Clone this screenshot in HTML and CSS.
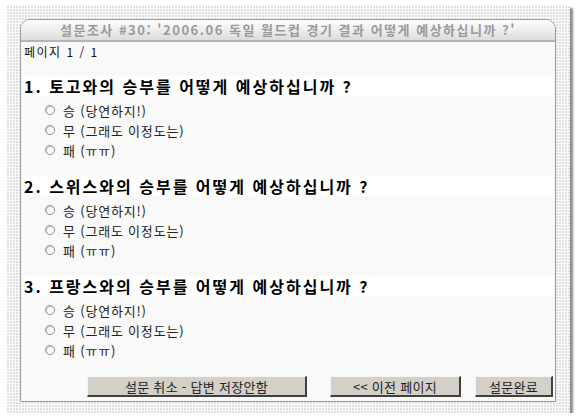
FILE: index.html
```html
<!DOCTYPE html>
<html lang="ko">
<head>
    <meta charset="UTF-8">
    <title>설문조사</title>
    <link rel="stylesheet" href="styles.css">
</head>
<body>
    <div class="frame">
        <div class="panel">
            <div class="title">설문조사 #30: '2006.06 독일 월드컵 경기 결과 어떻게 예상하십니까 ?'</div>
            <div class="content">
                <div class="page-info">페이지 1 / 1</div>

                <div class="question">
                    <h2>1. 토고와의 승부를 어떻게 예상하십니까 ?</h2>
                    <label class="option"><span class="radio"></span>승 (당연하지!)</label>
                    <label class="option"><span class="radio"></span>무 (그래도 이정도는)</label>
                    <label class="option"><span class="radio"></span>패 (ㅠㅠ)</label>
                </div>

                <div class="question">
                    <h2>2. 스위스와의 승부를 어떻게 예상하십니까 ?</h2>
                    <label class="option"><span class="radio"></span>승 (당연하지!)</label>
                    <label class="option"><span class="radio"></span>무 (그래도 이정도는)</label>
                    <label class="option"><span class="radio"></span>패 (ㅠㅠ)</label>
                </div>

                <div class="question">
                    <h2>3. 프랑스와의 승부를 어떻게 예상하십니까 ?</h2>
                    <label class="option"><span class="radio"></span>승 (당연하지!)</label>
                    <label class="option"><span class="radio"></span>무 (그래도 이정도는)</label>
                    <label class="option"><span class="radio"></span>패 (ㅠㅠ)</label>
                </div>

                <div class="buttons">
                    <button class="btn btn-cancel">설문 취소 - 답변 저장안함</button>
                    <button class="btn btn-prev">&lt;&lt; 이전 페이지</button>
                    <button class="btn btn-done">설문완료</button>
                </div>
            </div>
        </div>
    </div>
</body>
</html>
```

FILE: styles.css
```css
body {
    margin: 0;
    padding: 5px 0 0 6px;
    background: #fff;
    font-family: "Noto Sans CJK KR", "Liberation Sans", sans-serif;
    color: #111;
}
.frame {
    width: 564px;
    height: 408px;
    box-sizing: border-box;
    padding: 14px 14px 11px 14px;
    background-color: #dedede;
    background-image: linear-gradient(90deg, #fff 1px, transparent 1px), linear-gradient(#fff 1px, transparent 1px);
    background-size: 3px 3px;
    box-shadow: 3px 3px 2px #8a8a8a;
}
.panel {
    height: 100%;
    box-sizing: border-box;
    border: 1px solid #9a9a9a;
    border-radius: 10px 10px 0 0;
    background: #f9f9f9;
    display: flex;
    flex-direction: column;
}
.title {
    height: 20px;
    line-height: 20px;
    border-bottom: 2px solid #b4b4b4;
    border-radius: 9px 9px 0 0;
    background: linear-gradient(#ffffff, #dcdcdc);
    text-align: center;
    color: #9a9a9a;
    font-size: 13px;
    font-weight: bold;
    letter-spacing: 1.5px;
}
.content {
    flex: 1;
    padding: 2px 2px 0 3px;
    display: flex;
    flex-direction: column;
}
.page-info {
    height: 16px;
    line-height: 16px;
    font-size: 12px;
    letter-spacing: 1.5px;
    margin-bottom: 16px;
}
.question {
    margin-bottom: 16px;
}
.question h2 {
    margin: 0 0 4px 0;
    height: 20px;
    line-height: 20px;
    background: #fff;
    font-size: 16px;
    font-weight: bold;
    letter-spacing: 2px;
    color: #000;
}
.option {
    display: flex;
    align-items: center;
    height: 20px;
    padding-left: 21px;
    font-size: 13px;
    letter-spacing: 0.8px;
    color: #222;
}
.radio {
    width: 8px;
    height: 8px;
    border: 1px solid #8c8c8c;
    border-radius: 50%;
    background: #fff;
    box-shadow: inset 1px 1px 1px #c8c8c8;
    margin-right: 8px;
}
.buttons {
    margin-top: auto;
    margin-bottom: 4px;
    display: flex;
    justify-content: flex-end;
}
.btn {
    height: 21px;
    padding: 0;
    background: #d4d0c8;
    border: 1px solid;
    border-color: #f4f4f4 #404040 #404040 #f4f4f4;
    border-width: 1px 2px 2px 1px;
    font-family: "Noto Sans CJK KR", "Liberation Sans", sans-serif;
    font-size: 13px;
    letter-spacing: 0.3px;
    color: #222;
}
.btn-cancel {
    width: 220px;
    margin-right: 23px;
}
.btn-prev {
    width: 131px;
    margin-right: 14px;
}
.btn-done {
    width: 78px;
}
```
